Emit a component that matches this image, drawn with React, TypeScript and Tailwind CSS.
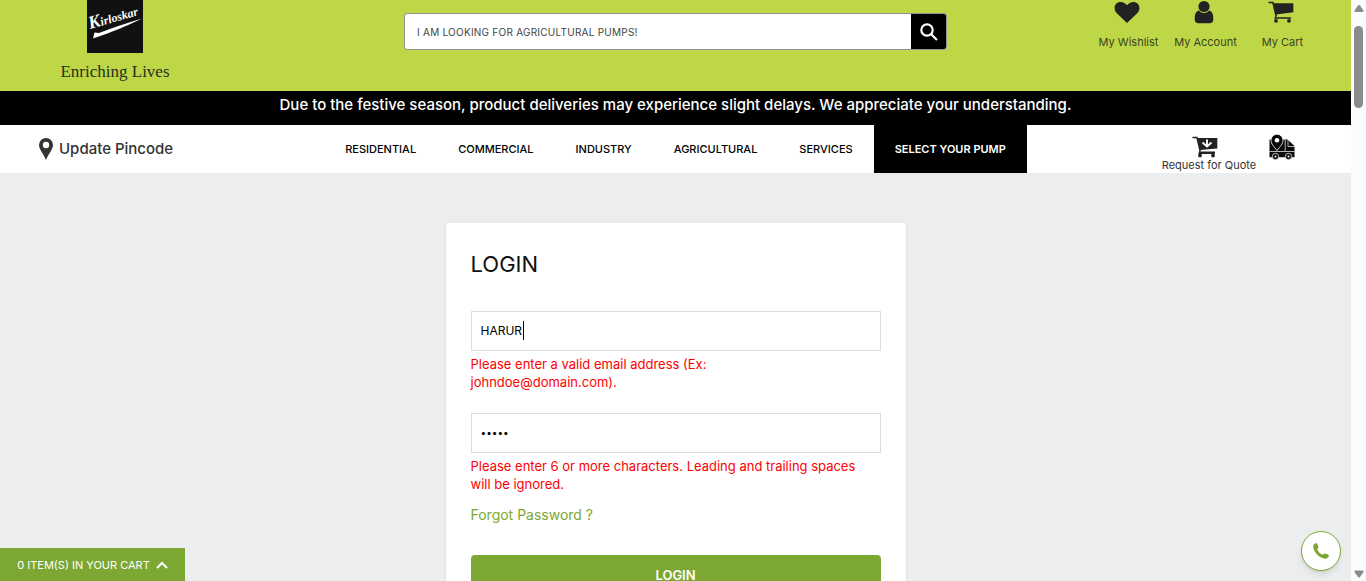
import React, { useState } from "react";

const categories = ["RESIDENTIAL", "COMMERCIAL", "INDUSTRY", "AGRICULTURAL", "SERVICES"];

function Logo() {
  return (
    <a href="#home" className="flex w-28 flex-col items-center" aria-label="Kirloskar">
      <svg width="56" height="53" viewBox="0 0 56 53">
        <rect width="56" height="53" fill="#111111" />
        <text x="3" y="29" transform="rotate(-16 3 29)" fill="#ffffff" fontFamily="Liberation Serif, serif" fontStyle="italic" fontWeight="700" fontSize="12">
          <tspan fontSize="18">K</tspan>irloskar
        </text>
        <path d="M7.500 32.500 12 33 Q30 26 55 18.500 Q32 30 6 38.500z" fill="#ffffff" />
      </svg>
      <span className="mt-[9px] whitespace-nowrap font-['Liberation_Serif',serif] text-[17px] leading-5 text-[#26301a]">
        Enriching Lives
      </span>
    </a>
  );
}

function HeartIcon() {
  return (
    <svg width="26" height="22" viewBox="0 0 26 22" fill="#222222">
      <path d="M13 22 2.800 12.200C1.200 10.600.6 8.800.6 7 .6 3.300 3 .900 6.600.900c2.600 0 4.900 1.300 6.400 3.300C14.500 2.200 16.800.900 19.400.900c3.600 0 6 2.400 6 6.100 0 1.800-.6 3.600-2.200 5.200z" />
    </svg>
  );
}

function UserIcon() {
  return (
    <svg width="20" height="24" viewBox="0 0 20 24" fill="#222222">
      <circle cx="10" cy="6.500" r="5.600" />
      <path d="M5 10.500C2.300 11 .7 13.500.7 18v1.500C.7 22 2.200 23.200 4.200 23.200h11.600c2 0 3.500-1.200 3.500-3.700V18c0-4.500-1.600-7-4.300-7.500C13.800 12.200 12 13 10 13s-3.800-.8-5-2.500z" />
    </svg>
  );
}

function CartIcon() {
  return (
    <svg width="26" height="22" viewBox="0 0 26 22" fill="#222222">
      <path d="M.5.800h5L9 14.500l-.9 1.700H23v1.500H6.300l1-3L4.300 2.300H.5z" />
      <path d="M5.500 2.300h19.800v8.900L8.200 13.600z" />
      <circle cx="8" cy="19.800" r="1.900" />
      <circle cx="21" cy="19.800" r="1.900" />
    </svg>
  );
}

function QuoteCartIcon() {
  return (
    <svg width="26" height="22" viewBox="0 0 26 22">
      <g fill="#222222">
        <path d="M.5.800h5L9 14.500l-.9 1H23v2.500H6.300l1-3.500L4.300 2.300H.5z" />
        <path d="M5.500 2h19.800v10.500L8.200 14z" />
        <circle cx="8" cy="19.500" r="1.900" />
        <circle cx="21" cy="19.500" r="1.900" />
      </g>
      <path d="M15 3.500v7M10.500 6.500l4.500 4 4.500-4" fill="none" stroke="#ffffff" strokeWidth="1.900" />
    </svg>
  );
}

function TruckIcon() {
  return (
    <svg width="26" height="26" viewBox="0 0 26 26">
      <path d="M.5 5.500h18L25.500 12v11.200H.5z" fill="#0a0a0a" />
      <path d="M.5 17.500H16.200V5.500M16.200 17.500h9.300M19 5.500v7h6.500" fill="none" stroke="#ffffff" strokeWidth="0.700" />
      <path d="M8 16.500C5 12.500 2 10 2 6.200a6 6 0 0 1 12 0c0 3.800-3 6.300-6 10.300z" fill="#0a0a0a" stroke="#ffffff" strokeWidth="0.800" />
      <circle cx="8" cy="6.200" r="2.300" fill="#ffffff" />
      <g fill="#0a0a0a" stroke="#ffffff" strokeWidth="0.700">
        <circle cx="6.500" cy="22.500" r="3.200" />
        <circle cx="19.500" cy="22.500" r="3.200" />
      </g>
      <circle cx="6.500" cy="22.500" r="1" fill="#ffffff" />
      <circle cx="19.500" cy="22.500" r="1" fill="#ffffff" />
    </svg>
  );
}

function Header() {
  const links = [
    { label: "My Wishlist", icon: <HeartIcon /> },
    { label: "My Account", icon: <UserIcon /> },
    { label: "My Cart", icon: <CartIcon /> },
  ];
  return (
    <header className="grid h-[91px] grid-cols-[1fr_543px_1fr] items-start bg-[#bed747]">
      <div className="flex pl-[59px]">
        <Logo />
      </div>
      <form className="mt-[13px] flex h-[37px] overflow-hidden rounded-[3px] border border-[#8f9493] bg-white" onSubmit={(e) => e.preventDefault()}>
        <input
          type="search"
          aria-label="Search"
          placeholder="I AM LOOKING FOR AGRICULTURAL PUMPS!"
          className="min-w-0 flex-1 px-3 pt-[2px] text-[10px] tracking-wide text-[#333333] outline-none placeholder:text-[#444444]"
        />
        <button type="submit" aria-label="Search" className="flex w-[35px] items-center justify-center bg-black">
          <svg width="18" height="18" viewBox="0 0 18 18" fill="none" stroke="#ffffff" strokeWidth="2.200">
            <circle cx="7" cy="7" r="5.700" />
            <path d="m11 11 6 6" />
          </svg>
        </button>
      </form>
      <nav className="flex justify-end pr-[30px]" aria-label="Account">
        {links.map((link) => (
          <a key={link.label} href="#account" className="flex w-[77px] flex-col items-center gap-[10px] text-[11px] leading-4 whitespace-nowrap text-[#3b4424]">
            <span className="flex h-6 items-center pr-1">{link.icon}</span>
            {link.label}
          </a>
        ))}
      </nav>
    </header>
  );
}

function MainNav() {
  return (
    <nav className="grid h-12 grid-cols-[1fr_auto_1fr] items-stretch bg-white" aria-label="Main">
      <button type="button" className="flex items-center gap-[6px] pl-[39px] text-[15px] font-medium text-[#333333]">
        <svg width="14" height="22" viewBox="0 0 14 22" fill="#333333">
          <path fillRule="evenodd" d="M7 0a7 7 0 0 1 7 7c0 4-4 8-7 15C4 15 0 11 0 7a7 7 0 0 1 7-7zm0 3.800a3.200 3.200 0 1 0 0 6.400 3.200 3.200 0 0 0 0-6.400z" />
        </svg>
        Update Pincode
      </button>
      <div className="flex text-[11px] font-medium whitespace-nowrap text-black">
        {categories.map((name) => (
          <a key={name} href="#category" className="flex items-center px-[21px]">
            {name}
          </a>
        ))}
        <a href="#select" className="flex items-center bg-black px-[21px] font-semibold text-white">
          SELECT YOUR PUMP
        </a>
      </div>
      <div className="flex items-start justify-end gap-[10px] pr-[56px]">
        <a href="#quote" className="flex w-[100px] flex-col items-center pt-[11px] text-[11px] leading-[14px] whitespace-nowrap text-[#333333]">
          <span className="pr-2">
            <QuoteCartIcon />
          </span>
          Request for Quote
        </a>
        <a href="#track" aria-label="Track order" className="pt-[9px]">
          <TruckIcon />
        </a>
      </div>
    </nav>
  );
}

const fieldClass = "h-10 w-full border border-[#dddddd] bg-white px-[9px] pb-[2px] text-black outline-none";
const errorClass = "mt-1 text-[13px] leading-[18px] text-[#ff0000]";

function LoginCard() {
  const [email, setEmail] = useState("HARUR");
  const [password, setPassword] = useState("hello");
  return (
    <form noValidate className="mx-auto mt-[50px] w-[460px] rounded-[3px] bg-white px-[25px] pt-[26px] pb-10 shadow" onSubmit={(e) => e.preventDefault()}>
      <h1 className="text-[22px] leading-[30px] text-[#111111]">LOGIN</h1>
      <div className="relative mt-8">
        <input type="email" aria-label="Email" aria-describedby="email-error" value={email} onChange={(e) => setEmail(e.target.value)} className={`${fieldClass} text-xs`} />
        <span className="absolute top-[10px] left-[52px] h-[19px] w-px bg-black" />
      </div>
      <p id="email-error" className={errorClass}>
        Please enter a valid email address (Ex:
        <br />
        johndoe@domain.com).
      </p>
      <input type="password" aria-label="Password" aria-describedby="password-error" value={password} onChange={(e) => setPassword(e.target.value)} className={`${fieldClass} mt-[22px] text-[10px]`} />
      <p id="password-error" className={errorClass}>
        Please enter 6 or more characters. Leading and trailing spaces
        <br />
        will be ignored.
      </p>
      <a href="#forgot" className="mt-3 block w-fit text-sm leading-5 text-[#7ca733]">
        Forgot Password ?
      </a>
      <button type="submit" className="mt-[30px] h-10 w-full rounded bg-[#7da733] text-[13px] leading-4 font-semibold text-white">
        LOGIN
      </button>
    </form>
  );
}

function Scrollbar() {
  return (
    <div className="flex w-[15px] shrink-0 flex-col items-center bg-[#fcfcfc]" aria-hidden="true">
      <svg width="10" height="26" viewBox="0 0 10 26" fill="#8b8b8b">
        <path d="M4 5.500q1-1.200 2 0l3.500 5q.5 1.500-1 1.500h-7q-1.500 0-1-1.500z" />
      </svg>
      <div className="h-[82px] w-[9px] rounded-full bg-[#8b8b8b]" />
      <svg className="mt-auto mb-[3px]" width="10" height="8" viewBox="0 0 10 8" fill="#8b8b8b">
        <path d="M4 7q1 1.200 2 0l3.500-5q.5-1.500-1-1.500h-7Q0 .500.500 2z" />
      </svg>
    </div>
  );
}

export default function App() {
  return (
    <div className="flex h-screen overflow-hidden bg-[#ecedef] font-['Inter',sans-serif]">
      <div className="min-w-0 flex-1 overflow-hidden">
        <Header />
        <p className="h-[34px] bg-black text-center text-[15px] leading-7 font-medium text-white">
          Due to the festive season, product deliveries may experience slight delays. We appreciate your understanding.
        </p>
        <MainNav />
        <main>
          <LoginCard />
        </main>
      </div>
      <Scrollbar />
      <button type="button" className="fixed bottom-0 left-0 flex h-[33px] w-[185px] items-center justify-center gap-[6px] bg-[#7da733] pt-px text-[11px] whitespace-nowrap text-white">
        0 ITEM(S) IN YOUR CART
        <svg width="12" height="8" viewBox="0 0 12 8" fill="none" stroke="#ffffff" strokeWidth="2">
          <path d="m1 7 5-5 5 5" />
        </svg>
      </button>
      <a href="tel:" aria-label="Call us" className="fixed right-[25px] bottom-[10px] flex size-10 items-center justify-center rounded-full border border-[#7da733] bg-white shadow-md">
        <svg width="16" height="16" viewBox="0 0 16 16" fill="#7da733">
          <path d="M1.500.800C2.500.300 4 .100 4.400.800l1 3.500c.2.800-1.300 1.700-1.200 2.300C5 8.800 7 10.700 9.400 11.700c.7.100 1.300-1.300 2.200-1.200l3.600.900c.9.300.700 1.900.100 2.900-1 1.500-3.300 1.700-5.300 1C5.500 13.600 2 10 .7 6 0 4 .2 1.800 1.500.800z" />
        </svg>
      </a>
    </div>
  );
}
